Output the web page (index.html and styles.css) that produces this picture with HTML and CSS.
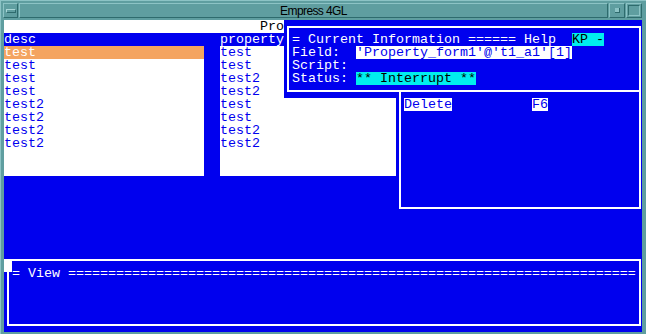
FILE: index.html
```html
<!DOCTYPE html>
<html lang="en">
<head>
    <meta charset="UTF-8">
    <title>Empress 4GL</title>
    <link rel="stylesheet" href="styles.css">
</head>
<body>
    <div class="window">

        <!-- Barre de titre -->
        <div class="titlebar">
            <div class="tb-btn tb-menu"><span class="tb-bar"></span></div>
            <div class="tb-btn tb-title">Empress 4GL</div>
            <div class="tb-btn tb-min"><span class="tb-dot"></span></div>
            <div class="tb-btn tb-max"><span class="tb-box"></span></div>
        </div>

        <!-- Ecran du terminal -->
        <div class="term">
            <div class="form-title">                                Property_form1</div>

            <div class="lists">
                <div class="col col-desc">
                    <div class="col-head">desc</div>
                    <ul class="list">
                        <li class="sel">test</li>
                        <li>test</li>
                        <li>test</li>
                        <li>test</li>
                        <li>test2</li>
                        <li>test2</li>
                        <li>test2</li>
                        <li>test2</li>
                    </ul>
                </div>
                <div class="col col-prop">
                    <div class="col-head">property</div>
                    <ul class="list">
                        <li>test</li>
                        <li>test</li>
                        <li>test2</li>
                        <li>test2</li>
                        <li>test</li>
                        <li>test</li>
                        <li>test2</li>
                        <li>test2</li>
                    </ul>
                </div>
            </div>

            <div class="spacer"></div>

            <div class="view-area">
                <span class="cursor"></span>
                <div class="view-box">= View =======================================================================</div>
            </div>

            <!-- Fenetre d'information -->
            <div class="info">
                <div class="info-box">
                    <div class="line">= Current Information ====== Help  <span class="hl-cyan">KP -</span></div>
                    <div class="line">Field:  <span class="hl-white">'Property_form1'@'t1_a1'[1]</span></div>
                    <div class="line">Script:</div>
                    <div class="line">Status: <span class="hl-cyan">** Interrupt **</span></div>
                </div>
            </div>

            <!-- Fenetre des touches -->
            <div class="help">
                <div class="help-box"><span class="hl-white">Delete</span><span class="hl-white key">F6</span></div>
            </div>
        </div>
    </div>
</body>
</html>
```

FILE: styles.css
```css
body {
    margin: 0;
}

/* Cadre de la fenetre */
.window {
    width: 646px;
    height: 334px;
    box-sizing: border-box;
    padding: 0 4px 3px 3px;
    background-color: #5f9ea0;
    border-top: 1px solid #8cc3c5;
    border-left: 1px solid #8cc3c5;
}

.titlebar {
    display: flex;
    height: 18px;
    box-sizing: border-box;
    padding: 2px 0 1px 0;
    margin-left: -1px;
    gap: 1px;
}

.tb-btn {
    box-sizing: border-box;
    border-top: 1px solid #8cc3c5;
    border-left: 1px solid #8cc3c5;
    border-bottom: 1px solid #2e6b6d;
    border-right: 1px solid #2e6b6d;
    display: flex;
    align-items: center;
    justify-content: center;
}

.tb-menu {
    width: 15px;
}

.tb-bar {
    width: 10px;
    height: 4px;
    box-sizing: border-box;
    border-top: 1px solid #a9d6d7;
    border-left: 1px solid #a9d6d7;
    border-bottom: 1px solid #2e6b6d;
    border-right: 1px solid #2e6b6d;
}

.tb-title {
    flex: 1;
    font-family: "Liberation Sans", sans-serif;
    font-size: 12px;
    letter-spacing: -0.6px;
    color: #000;
}

.tb-min {
    width: 16px;
}

.tb-dot {
    width: 4px;
    height: 4px;
    background: #8cc3c5;
    border-right: 1px solid #2e6b6d;
    border-bottom: 1px solid #2e6b6d;
}

.tb-max {
    width: 16px;
}

.tb-box {
    width: 12px;
    height: 11px;
    box-sizing: border-box;
    border-top: 1px solid #2e6b6d;
    border-left: 1px solid #2e6b6d;
    border-bottom: 1px solid #8cc3c5;
    border-right: 1px solid #8cc3c5;
}

/* Zone du terminal */
.term {
    position: relative;
    height: 312px;
    margin-top: 1px;
    background-color: #0000ee;
    color: #fff;
    font-family: "Liberation Mono", monospace;
    font-size: 13.33px;
    line-height: 13px;
    white-space: nowrap;
    overflow: hidden;
}

.form-title {
    height: 13px;
    background: #fff;
    color: #000;
    white-space: pre;
}

.lists {
    display: flex;
    gap: 16px;
}

.col-desc {
    width: 200px;
}

.col-prop {
    width: 176px;
}

.col-head {
    height: 13px;
}

.list {
    list-style: none;
    margin: 0;
    padding: 0;
    height: 130px;
    background: #fff;
    color: #0000ee;
}

.list li {
    height: 13px;
}

.list .sel {
    background: #f4a460;
    color: #fff;
}

.spacer {
    height: 78px;
}

.view-area {
    position: relative;
    height: 78px;
}

.cursor {
    position: absolute;
    left: 0;
    top: 0;
    width: 8px;
    height: 13px;
    background: #fff;
}

.view-box {
    margin: 5px 1px 0 3px;
    height: 67px;
    box-sizing: border-box;
    border: 2px solid #fff;
    padding: 6px 0 0 3px;
}

/* Fenetres superposees */
.info {
    position: absolute;
    left: 280px;
    top: 0;
    width: 359px;
    height: 78px;
    background: #0000ee;
}

.info-box {
    margin: 6px 2px 0 3px;
    height: 66px;
    box-sizing: border-box;
    border: 2px solid #fff;
    padding: 5px 0 0 3px;
}

.info-box .line {
    height: 13px;
    white-space: pre;
}

.help {
    position: absolute;
    left: 392px;
    top: 72px;
    width: 247px;
    height: 123px;
    background: #0000ee;
}

.help-box {
    margin: 0 2px 0 3px;
    height: 117px;
    box-sizing: border-box;
    border: 2px solid #fff;
    border-top: none;
    padding: 6px 0 0 3px;
}

.hl-cyan,
.hl-white {
    display: inline-block;
    height: 13px;
    vertical-align: top;
}

.hl-cyan {
    background: #00eeee;
    color: #000;
}

.hl-white {
    background: #fff;
    color: #0000ee;
}

.key {
    margin-left: 80px;
}
```
